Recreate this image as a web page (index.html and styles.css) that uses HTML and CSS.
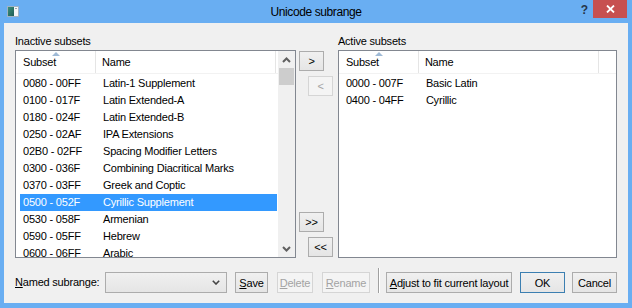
FILE: index.html
```html
<!DOCTYPE html>
<html>
<head>
<meta charset="utf-8">
<title>Unicode subrange</title>
<link rel="stylesheet" href="styles.css">
</head>
<body>
<div class="window">
  <div class="titlebar">
    <div class="tb-left">
      <svg class="appicon" width="12" height="11" viewBox="0 0 12 11">
        <defs>
          <linearGradient id="ig" x1="0" y1="0" x2="1" y2="1">
            <stop offset="0" stop-color="#3b8f7c"/>
            <stop offset="1" stop-color="#1f5d57"/>
          </linearGradient>
        </defs>
        <rect x="0.5" y="0.5" width="11" height="10" fill="#f4f6f8" stroke="#9fb3c4"/>
        <rect x="1" y="1" width="6" height="9" fill="url(#ig)"/>
        <rect x="8" y="2" width="2" height="1" fill="#9aa4ad"/>
      </svg>
    </div>
    <div class="title">Unicode subrange</div>
    <div class="tb-right">
      <div class="help">?</div>
      <div class="close">
        <svg width="9" height="8" viewBox="0 0 9 8"><path d="M1 0.5 L8 7.5 M8 0.5 L1 7.5" stroke="#fff" stroke-width="1.8" fill="none"/></svg>
      </div>
    </div>
  </div>

  <div class="client">
    <div class="main">
      <div class="panel panel-left">
        <div class="label">Inactive subsets</div>
        <div class="listbox">
          <div class="listview lv-left">
            <div class="header">
              <div class="hcol c1"><span class="sort"></span>Subset</div>
              <div class="hcol c2">Name</div>
            </div>
            <div class="rows">
              <div class="row"><div class="cell1">0080 - 00FF</div><div class="cell2">Latin-1 Supplement</div></div>
              <div class="row"><div class="cell1">0100 - 017F</div><div class="cell2">Latin Extended-A</div></div>
              <div class="row"><div class="cell1">0180 - 024F</div><div class="cell2">Latin Extended-B</div></div>
              <div class="row"><div class="cell1">0250 - 02AF</div><div class="cell2">IPA Extensions</div></div>
              <div class="row"><div class="cell1">02B0 - 02FF</div><div class="cell2">Spacing Modifier Letters</div></div>
              <div class="row"><div class="cell1">0300 - 036F</div><div class="cell2">Combining Diacritical Marks</div></div>
              <div class="row"><div class="cell1">0370 - 03FF</div><div class="cell2">Greek and Coptic</div></div>
              <div class="row selected"><div class="cell1">0500 - 052F</div><div class="cell2">Cyrillic Supplement</div></div>
              <div class="row"><div class="cell1">0530 - 058F</div><div class="cell2">Armenian</div></div>
              <div class="row"><div class="cell1">0590 - 05FF</div><div class="cell2">Hebrew</div></div>
              <div class="row"><div class="cell1">0600 - 06FF</div><div class="cell2">Arabic</div></div>
            </div>
          </div>
          <div class="scrollbar">
            <div class="sb-btn">
              <svg width="9" height="6" viewBox="0 0 9 6"><polyline points="1,5 4.5,1.5 8,5" fill="none" stroke="#606060" stroke-width="2"/></svg>
            </div>
            <div class="sb-thumb"></div>
            <div class="sb-track"></div>
            <div class="sb-btn">
              <svg width="9" height="6" viewBox="0 0 9 6"><polyline points="1,1 4.5,4.5 8,1" fill="none" stroke="#606060" stroke-width="2"/></svg>
            </div>
          </div>
        </div>
      </div>

      <div class="mid">
        <div class="mid-group">
          <div class="btn small b-r">&gt;</div>
          <div class="btn small b-l disabled">&lt;</div>
        </div>
        <div class="mid-group">
          <div class="btn small b-r">&gt;&gt;</div>
          <div class="btn small b-l">&lt;&lt;</div>
        </div>
      </div>

      <div class="panel panel-right">
        <div class="label">Active subsets</div>
        <div class="listbox">
          <div class="listview lv-right">
            <div class="header">
              <div class="hcol c1"><span class="sort"></span>Subset</div>
              <div class="hcol c2">Name</div>
            </div>
            <div class="rows">
              <div class="row"><div class="cell1">0000 - 007F</div><div class="cell2">Basic Latin</div></div>
              <div class="row"><div class="cell1">0400 - 04FF</div><div class="cell2">Cyrillic</div></div>
            </div>
          </div>
        </div>
      </div>
    </div>

    <div class="bottom">
      <div class="named"><u>N</u>amed subrange:</div>
      <div class="combo">
        <svg width="8" height="5" viewBox="0 0 8 5"><polyline points="0.8,0.8 4,4 7.2,0.8" fill="none" stroke="#444" stroke-width="1.6"/></svg>
      </div>
      <div class="btn b-save"><u>S</u>ave</div>
      <div class="btn b-delete disabled"><u>D</u>elete</div>
      <div class="btn b-rename disabled"><u>R</u>ename</div>
      <div class="vsep"></div>
      <div class="btn b-adjust"><u>A</u>djust to fit current layout</div>
      <div class="btn b-ok default">OK</div>
      <div class="btn b-cancel">Cancel</div>
    </div>
  </div>
</div>
</body>
</html>
```

FILE: styles.css
```css
* { box-sizing: border-box; }

html, body {
  margin: 0;
  padding: 0;
}

body {
  width: 632px;
  height: 308px;
  overflow: hidden;
  font-family: "Liberation Sans", Arial, sans-serif;
  font-size: 11px;
  letter-spacing: -0.2px;
  color: #000;
}

.window {
  width: 632px;
  height: 308px;
  background: #69aef2;
  display: flex;
  flex-direction: column;
}

/* ---------- title bar ---------- */
.titlebar {
  height: 23px;
  display: grid;
  grid-template-columns: 1fr auto 1fr;
  align-items: start;
}

.tb-left {
  padding: 6px 0 0 7px;
  display: flex;
}

.appicon { display: block; }

.title {
  font-size: 12px;
  letter-spacing: -0.4px;
  line-height: 16px;
  padding-top: 4px;
  color: #000;
}

.tb-right {
  display: flex;
  justify-content: flex-end;
  align-items: flex-start;
  padding-right: 5px;
}

.help {
  font-weight: bold;
  font-size: 12px;
  line-height: 14px;
  color: #26354a;
  margin-top: 3px;
  margin-right: 5px;
}

.close {
  width: 34px;
  height: 18px;
  background: #c75050;
  display: flex;
  align-items: center;
  justify-content: center;
}

/* ---------- client ---------- */
.client {
  margin: 0 4px 5px 4px;
  height: 280px;
  background: #f0f0f0;
  padding: 12px 11px 10px 11px;
  display: flex;
  flex-direction: column;
}

.main {
  display: flex;
  height: 223px;
}

.panel-left { width: 281px; }
.panel-right { width: 280px; }

.label {
  height: 15px;
  line-height: 13px;
  white-space: nowrap;
}

.listbox {
  height: 208px;
  border: 1px solid #828790;
  background: #fff;
  display: flex;
  overflow: hidden;
}

.listview {
  height: 100%;
  overflow: hidden;
}

.lv-left { width: 262px; }
.lv-right { flex: 1; }

.header {
  height: 23px;
  display: flex;
  border-bottom: 1px solid #f2f2f2;
}

.hcol {
  position: relative;
  height: 22px;
  line-height: 22px;
  padding-left: 7px;
  border-right: 1px solid #e5e5e5;
  white-space: nowrap;
}

.hcol.c1 { width: 80px; }
.hcol.c2 { width: 180px; padding-left: 6px; }

.sort {
  position: absolute;
  top: 1px;
  left: 36px;
  width: 0;
  height: 0;
  border-left: 4px solid transparent;
  border-right: 4px solid transparent;
  border-bottom: 4px solid #9fbad6;
}

.rows { padding-top: 1px; }

.row {
  display: flex;
  height: 17px;
  line-height: 17px;
  margin-left: 4px;
  width: 257px;
  white-space: nowrap;
}

.cell1 { width: 76px; padding-left: 3px; }
.cell2 { padding-left: 7px; }

.row.selected {
  background: #3399ff;
  color: #fff;
}

/* scrollbar */
.scrollbar {
  width: 17px;
  height: 100%;
  background: #f0f0f0;
  display: flex;
  flex-direction: column;
}

.sb-btn {
  height: 17px;
  display: flex;
  align-items: center;
  justify-content: center;
}

.sb-thumb {
  height: 17px;
  margin: 0 1px;
  background: #cdcdcd;
}

.sb-track { flex: 1; }

/* middle buttons */
.mid {
  width: 42px;
  padding-top: 16px;
  padding-bottom: 1px;
  display: flex;
  flex-direction: column;
  justify-content: space-between;
}

.mid-group {
  display: flex;
  flex-direction: column;
  gap: 5px;
}

.btn {
  border: 1px solid #acacac;
  background: linear-gradient(#f0f0f0, #e5e5e5);
  display: flex;
  align-items: center;
  justify-content: center;
  white-space: nowrap;
  height: 21px;
}

.btn.small {
  width: 25px;
  height: 20px;
}

.b-r { margin-left: 3px; }
.b-l { margin-left: 12px; }

.btn.disabled {
  border-color: #d5d5d5;
  background: #f4f4f4;
  color: #a3a3a3;
}

.btn.default { border-color: #3c7fb1; }

/* bottom row */
.bottom {
  margin-top: 14px;
  height: 21px;
  display: flex;
  align-items: stretch;
}

.named {
  width: 90px;
  line-height: 21px;
  white-space: nowrap;
}

.combo {
  width: 122px;
  height: 21px;
  border: 1px solid #acacac;
  background: linear-gradient(#f0f0f0, #e5e5e5);
  display: flex;
  align-items: center;
  justify-content: flex-end;
  padding-right: 6px;
}

.b-save { margin-left: 8px; width: 33px; }
.b-delete { margin-left: 9px; width: 36px; }
.b-rename { margin-left: 9px; width: 48px; }

.vsep {
  margin-left: 8px;
  width: 2px;
  margin-top: -4px;
  border-left: 1px solid #a0a0a0;
  border-right: 1px solid #ffffff;
}

.b-adjust { margin-left: 6px; width: 126px; }
.b-ok { margin-left: 8px; width: 45px; }
.b-cancel { margin-left: 7px; width: 45px; }
```
